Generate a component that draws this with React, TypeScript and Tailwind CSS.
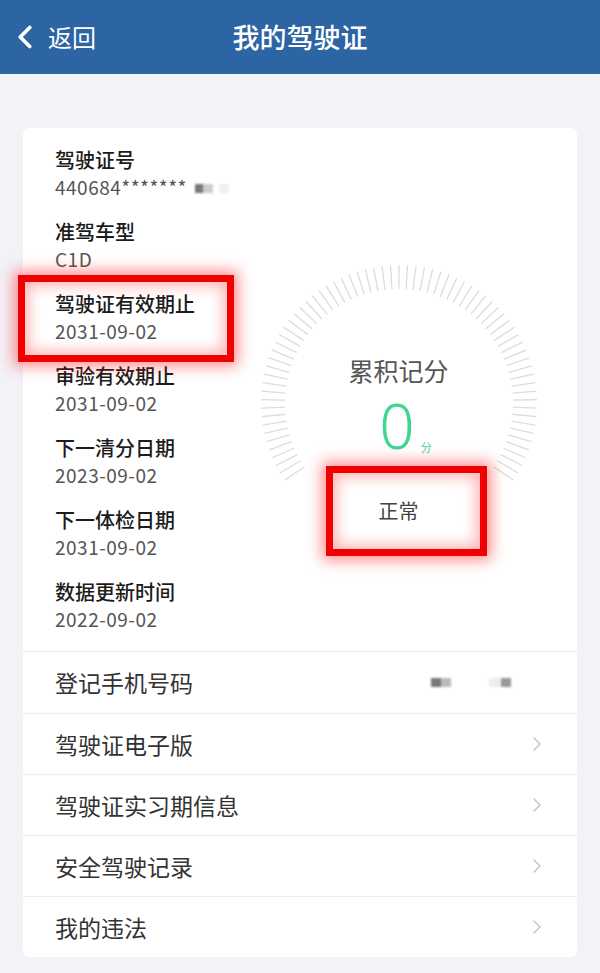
import { ChevronLeft, ChevronRight } from 'lucide-react';

const infoItems = [
  { label: '驾驶证号', value: '440684*******', masked: true },
  { label: '准驾车型', value: 'C1D' },
  { label: '驾驶证有效期止', value: '2031-09-02' },
  { label: '审验有效期止', value: '2031-09-02' },
  { label: '下一清分日期', value: '2023-09-02' },
  { label: '下一体检日期', value: '2031-09-02' },
  { label: '数据更新时间', value: '2022-09-02' },
];

const links = ['驾驶证电子版', '驾驶证实习期信息', '安全驾驶记录', '我的违法'];

const font = { fontFamily: '"Noto Sans CJK SC", "Noto Sans", sans-serif' };

function Gauge() {
  // 刻度: 底部留缺口, 共 71 根
  const count = 71;
  const start = -124;
  const end = 124;
  const ticks = Array.from({ length: count }, (_, i) => {
    const a = ((start + ((end - start) * i) / (count - 1)) * Math.PI) / 180;
    const s = Math.sin(a);
    const c = Math.cos(a);
    return { x1: 140 + 114 * s, y1: 140 - 114 * c, x2: 140 + 138 * s, y2: 140 - 138 * c };
  });

  return (
    <div className="relative w-[280px] h-[280px]">
      <svg className="absolute inset-0" width="280" height="280" viewBox="0 0 280 280">
        {ticks.map((t, i) => (
          <line key={i} x1={t.x1} y1={t.y1} x2={t.x2} y2={t.y2} stroke="#dcdcdc" strokeWidth="1.3" />
        ))}
      </svg>
      <div className="relative flex flex-col items-center pt-[91px]">
        <div className="text-[25px] leading-[32px] text-[#555]">累积记分</div>
        <div className="flex items-end mt-[8px] ml-[14px]">
          <span
            className="text-[62px] leading-[62px] font-light text-[#3fd690]"
            style={{ fontFamily: '"Noto Sans", sans-serif' }}
          >
            0
          </span>
          <span className="text-[11px] leading-[14px] text-[#3fd690] ml-[6px] mb-[2px]">分</span>
        </div>
        <div className="text-[20px] leading-[26px] text-[#444] mt-[42px]">正常</div>
      </div>
    </div>
  );
}

export default function App() {
  return (
    <div className="relative w-[600px] h-[973px] bg-[#f2f2f7] overflow-hidden" style={font}>
      {/* Header */}
      <div className="relative h-[74px] bg-[#2c64a4] flex items-center justify-center">
        <div className="absolute left-[6px] top-0 h-full flex items-center text-white">
          <ChevronLeft size={38} strokeWidth={2.4} />
          <span className="text-[24px] ml-[4px]">返回</span>
        </div>
        <span className="text-white text-[27px] font-medium">我的驾驶证</span>
      </div>

      {/* Card */}
      <div className="mx-[23px] mt-[54px] bg-white rounded-[6px]">
        <div className="flex">
          <div className="w-[230px] pl-[32px] pt-[18px] pb-[19px] flex flex-col gap-[18px]">
            {infoItems.map(item => (
              <div key={item.label}>
                <div className="text-[20px] leading-[27px] font-medium text-[#1c1c1c] whitespace-nowrap">{item.label}</div>
                <div className="text-[19px] leading-[27px] text-[#555] flex items-center whitespace-nowrap tracking-[0.5px]">
                  {item.value}
                  {item.masked && (
                    <span className="flex items-center ml-[8px] mt-[4px] blur-[1px]">
                      <span className="w-[8px] h-[9px] bg-[#777]" />
                      <span className="w-[10px] h-[9px] bg-[#ccc]" />
                      <span className="w-[10px] h-[9px] bg-[#eee] ml-[6px]" />
                    </span>
                  )}
                </div>
              </div>
            ))}
          </div>
          <div className="flex-1 flex justify-center pt-[135px] pr-[33px]">
            <Gauge />
          </div>
        </div>

        <div className="border-t border-[#eeeeee] h-[62px] flex items-center pl-[32px] pr-[30px]">
          <span className="text-[23px] text-[#333]">登记手机号码</span>
          <div className="flex-1" />
          <span className="flex items-center blur-[1px] mr-[36px]">
            <span className="w-[10px] h-[9px] bg-[#777]" />
            <span className="w-[10px] h-[9px] bg-[#bbb]" />
            <span className="w-[12px] h-[9px] bg-[#eee] ml-[38px]" />
            <span className="w-[10px] h-[9px] bg-[#999]" />
          </span>
        </div>
        {links.map(l => (
          <div key={l} className="border-t border-[#eeeeee] h-[61px] flex items-center pl-[32px] pr-[28px]">
            <span className="text-[23px] text-[#333]">{l}</span>
            <div className="flex-1" />
            <ChevronRight size={24} strokeWidth={1.2} className="text-[#bdbdbd]" />
          </div>
        ))}
      </div>

      {/* 标注框 */}
      <div className="absolute left-[18px] top-[275px] w-[216px] h-[87px] border-[7px] border-[#f00000] shadow-[0_0_14px_4px_rgba(255,0,0,0.45),inset_0_0_14px_4px_rgba(255,0,0,0.3)]" />
      <div className="absolute left-[326px] top-[466px] w-[161px] h-[90px] border-[7px] border-[#f00000] shadow-[0_0_14px_4px_rgba(255,0,0,0.45),inset_0_0_14px_4px_rgba(255,0,0,0.3)]" />
    </div>
  );
}
